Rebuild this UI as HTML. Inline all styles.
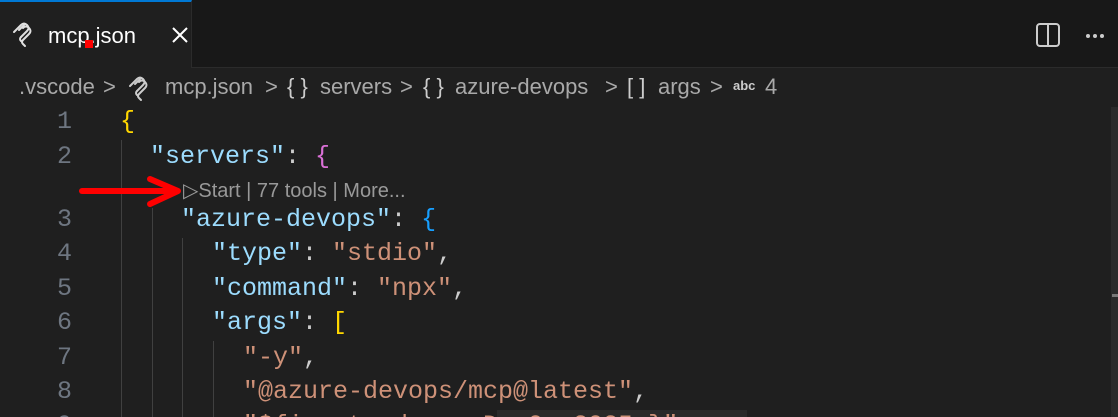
<!DOCTYPE html>
<html><head><meta charset="utf-8"><style>
*{margin:0;padding:0;box-sizing:border-box}
html{width:1118px;height:417px;overflow:hidden}
body{width:1118px;height:417px;overflow:hidden;background:#1f1f1f;position:relative;font-family:"Liberation Sans",sans-serif}
.tabbar{position:absolute;left:0;top:0;width:1118px;height:68px;background:#181818;border-bottom:1px solid #2b2b2b}
.tab{position:absolute;left:0;top:0;width:192px;height:68px;background:#1f1f1f;border-top:2px solid #0078d4;border-right:1px solid #2b2b2b}
.a{position:absolute;white-space:pre}
.bc{color:#a9a9a9;font-size:22px;top:74px}
.code{font-family:"Liberation Mono",monospace;font-size:25px;color:#cccccc;height:34px;line-height:34px}
.ln{font-family:"Liberation Mono",monospace;font-size:25px;color:#6e7681;width:40px;text-align:right;left:32px;height:34px;line-height:34px}
.k{color:#9cdcfe}.s{color:#ce9178}.y{color:#ffd700}.p{color:#da70d6}.b{color:#179fff}
.g{position:absolute;width:1px;background:#404040}
</style></head><body>
<div class="tabbar"></div>
<div class="tab"></div>
<svg class="a" style="left:12px;top:22px" width="22" height="26" viewBox="0 0 22 26" fill="none" stroke="#e0e0e0" stroke-width="2" stroke-linecap="round"><path d="M2 10 L9 3 Q12 0 15 3 Q18 6 15 9 L9 15"/><path d="M7 8 L13 2"/><path d="M11 6 Q14 3 17 6 Q20 9 17 12 L11 18 Q9 20 11 22 L13 24"/><path d="M9 15 Q7 17 9 19"/></svg>
<div class="a" style="left:48px;top:23px;color:#fff;font-size:22px">mcp.json</div>
<div class="a" style="left:85px;top:40px;width:8px;height:8px;background:#f00"></div>
<svg class="a" style="left:171px;top:26px" width="18" height="18" viewBox="0 0 18 18" stroke="#fff" stroke-width="2"><path d="M2 2L16 16M16 2L2 16"/></svg>
<svg class="a" style="left:1036px;top:23px" width="24" height="24" viewBox="0 0 24 24" fill="none" stroke="#cccccc" stroke-width="2"><rect x="1" y="1" width="22" height="22" rx="3"/><path d="M12 1V23"/></svg>
<div class="a" style="left:1086px;top:34px;width:4px;height:4px;background:#ccc;border-radius:2px;box-shadow:7px 0 #ccc,14px 0 #ccc"></div>

<div class="a bc" style="left:19px">.vscode</div>
<div class="a bc" style="left:103px">&gt;</div>
<svg class="a" style="left:128px;top:76px" width="22" height="26" viewBox="0 0 22 26" fill="none" stroke="#cccccc" stroke-width="2" stroke-linecap="round"><path d="M2 10 L9 3 Q12 0 15 3 Q18 6 15 9 L9 15"/><path d="M7 8 L13 2"/><path d="M11 6 Q14 3 17 6 Q20 9 17 12 L11 18 Q9 20 11 22 L13 24"/><path d="M9 15 Q7 17 9 19"/></svg>
<div class="a bc" style="left:165px">mcp.json</div>
<div class="a bc" style="left:265px">&gt;</div>
<div class="a bc" style="left:287px;color:#ccc">{ }</div>
<div class="a bc" style="left:320px">servers</div>
<div class="a bc" style="left:400px">&gt;</div>
<div class="a bc" style="left:423px;color:#ccc">{ }</div>
<div class="a bc" style="left:455px">azure-devops</div>
<div class="a bc" style="left:605px">&gt;</div>
<div class="a bc" style="left:627px;color:#ccc">[ ]</div>
<div class="a bc" style="left:658px">args</div>
<div class="a bc" style="left:710px">&gt;</div>
<div class="a" style="left:733px;top:78px;font-size:13px;font-weight:bold;color:#ccc">abc</div>
<div class="a bc" style="left:765px">4</div>

<div class="g" style="left:121px;top:140px;height:277px"></div>
<div class="g" style="left:152px;top:208px;height:209px"></div>
<div class="g" style="left:182px;top:238px;height:179px"></div>
<div class="g" style="left:213px;top:341px;height:76px"></div>
<div class="a" style="left:1111px;top:107px;width:7px;height:310px;background:#2a2a2a"></div>
<div class="a" style="left:1112px;top:294px;width:6px;height:3px;background:#777"></div>

<div class="a ln" style="top:105px">1</div><div class="a code" style="left:120px;top:105px"><span class="y">{</span></div>
<div class="a ln" style="top:140px">2</div><div class="a code" style="left:150px;top:140px"><span class="k">"servers"</span>: <span class="p">{</span></div>
<div class="a" style="left:183px;top:178px;font-size:20px;color:#999">▷Start | 77 tools | More...</div>
<svg class="a" style="left:78px;top:174px" width="104" height="34" viewBox="0 0 104 34"><path d="M4 17H90" stroke="#f00" stroke-width="6" stroke-linecap="round"/><path d="M72 5L100 17L72 30" fill="none" stroke="#f00" stroke-width="6" stroke-linecap="round" stroke-linejoin="round"/></svg>
<div class="a ln" style="top:203px">3</div><div class="a code" style="left:181px;top:203px"><span class="k">"azure-devops"</span>: <span class="b">{</span></div>
<div class="a ln" style="top:237px">4</div><div class="a code" style="left:212px;top:237px"><span class="k">"type"</span>: <span class="s">"stdio"</span>,</div>
<div class="a ln" style="top:272px">5</div><div class="a code" style="left:212px;top:272px"><span class="k">"command"</span>: <span class="s">"npx"</span>,</div>
<div class="a ln" style="top:306px">6</div><div class="a code" style="left:212px;top:306px"><span class="k">"args"</span>: <span class="y">[</span></div>
<div class="a ln" style="top:341px">7</div><div class="a code" style="left:243px;top:341px"><span class="s">"-y"</span>,</div>
<div class="a ln" style="top:375px">8</div><div class="a code" style="left:243px;top:375px"><span class="s">"@azure-devops/mcp@latest"</span>,</div>
<div class="a" style="left:0;top:409px;width:1110px;height:8px;overflow:hidden">
<div class="a" style="left:497px;top:1px;width:250px;height:7px;background:#2a2a2a"></div>
<div class="a ln" style="top:0">9</div><div class="a code" style="left:243px;top:0"><span class="s">"${input:ado    DevOps2025 }"</span></div>
</div>
</body></html>
